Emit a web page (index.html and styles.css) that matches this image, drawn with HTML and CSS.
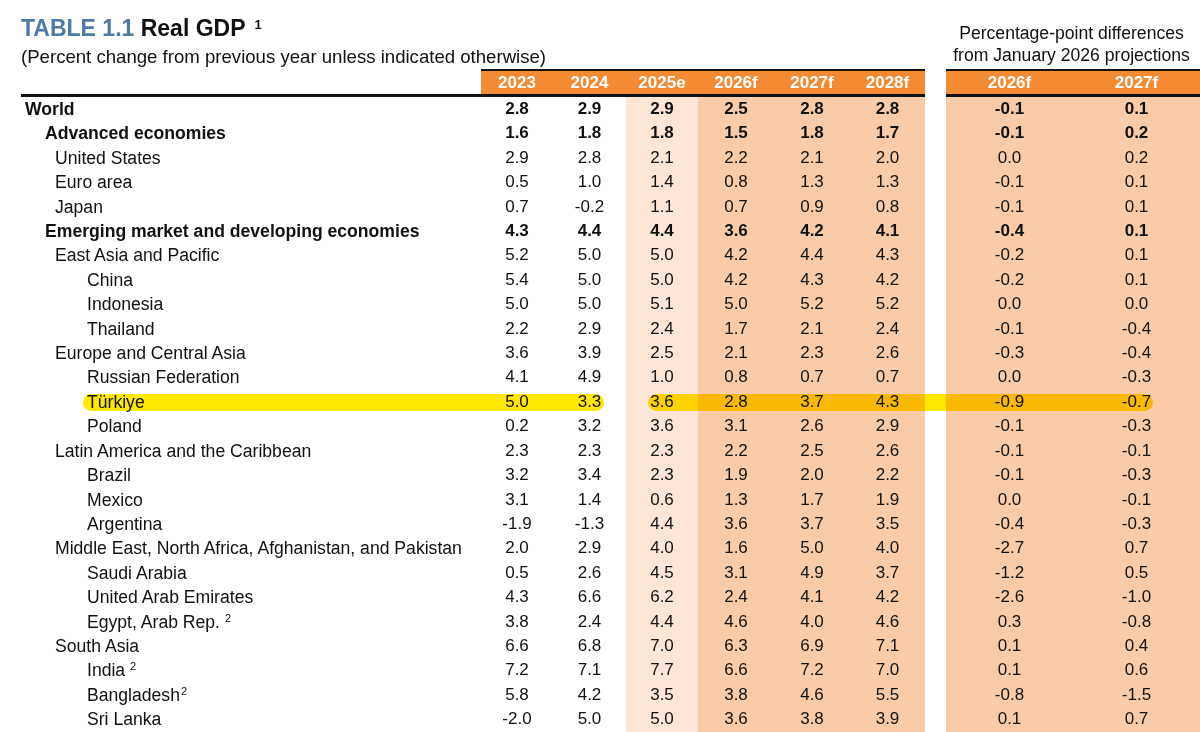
FILE: index.html
```html
<!DOCTYPE html>
<html lang="en">
<head>
<meta charset="utf-8">
<title>Table 1.1 Real GDP</title>
<link rel="stylesheet" href="styles.css">
</head>
<body>
<div class="page">
  <header class="top">
    <div class="titles">
      <h1 class="title"><span class="tag">TABLE 1.1</span> Real GDP <sup class="fn">1</sup></h1>
      <p class="subtitle">(Percent change from previous year unless indicated otherwise)</p>
    </div>
    <div class="diffcap">Percentage-point differences<br>from January 2026 projections</div>
  </header>
  <table class="gdp">
    <colgroup>
      <col class="w-label"><col class="w72"><col class="w73"><col class="w72"><col class="w76"><col class="w76"><col class="w75"><col class="w-gap"><col class="w127"><col class="w127">
    </colgroup>
    <thead>
      <tr><th class="label"></th><th>2023</th><th>2024</th><th>2025e</th><th>2026f</th><th>2027f</th><th>2028f</th><th class="gap"></th><th>2026f</th><th>2027f</th></tr>
    </thead>
    <tbody>
      <tr class="b"><td class="name l0">World</td><td>2.8</td><td>2.9</td><td class="light">2.9</td><td class="peach">2.5</td><td class="peach">2.8</td><td class="peach">2.8</td><td class="gap"></td><td class="peach">-0.1</td><td class="peach">0.1</td></tr>
      <tr class="b"><td class="name l1">Advanced economies</td><td>1.6</td><td>1.8</td><td class="light">1.8</td><td class="peach">1.5</td><td class="peach">1.8</td><td class="peach">1.7</td><td class="gap"></td><td class="peach">-0.1</td><td class="peach">0.2</td></tr>
      <tr><td class="name l2">United States</td><td>2.9</td><td>2.8</td><td class="light">2.1</td><td class="peach">2.2</td><td class="peach">2.1</td><td class="peach">2.0</td><td class="gap"></td><td class="peach">0.0</td><td class="peach">0.2</td></tr>
      <tr><td class="name l2">Euro area</td><td>0.5</td><td>1.0</td><td class="light">1.4</td><td class="peach">0.8</td><td class="peach">1.3</td><td class="peach">1.3</td><td class="gap"></td><td class="peach">-0.1</td><td class="peach">0.1</td></tr>
      <tr><td class="name l2">Japan</td><td>0.7</td><td>-0.2</td><td class="light">1.1</td><td class="peach">0.7</td><td class="peach">0.9</td><td class="peach">0.8</td><td class="gap"></td><td class="peach">-0.1</td><td class="peach">0.1</td></tr>
      <tr class="b"><td class="name l1">Emerging market and developing economies</td><td>4.3</td><td>4.4</td><td class="light">4.4</td><td class="peach">3.6</td><td class="peach">4.2</td><td class="peach">4.1</td><td class="gap"></td><td class="peach">-0.4</td><td class="peach">0.1</td></tr>
      <tr><td class="name l2">East Asia and Pacific</td><td>5.2</td><td>5.0</td><td class="light">5.0</td><td class="peach">4.2</td><td class="peach">4.4</td><td class="peach">4.3</td><td class="gap"></td><td class="peach">-0.2</td><td class="peach">0.1</td></tr>
      <tr><td class="name l3">China</td><td>5.4</td><td>5.0</td><td class="light">5.0</td><td class="peach">4.2</td><td class="peach">4.3</td><td class="peach">4.2</td><td class="gap"></td><td class="peach">-0.2</td><td class="peach">0.1</td></tr>
      <tr><td class="name l3">Indonesia</td><td>5.0</td><td>5.0</td><td class="light">5.1</td><td class="peach">5.0</td><td class="peach">5.2</td><td class="peach">5.2</td><td class="gap"></td><td class="peach">0.0</td><td class="peach">0.0</td></tr>
      <tr><td class="name l3">Thailand</td><td>2.2</td><td>2.9</td><td class="light">2.4</td><td class="peach">1.7</td><td class="peach">2.1</td><td class="peach">2.4</td><td class="gap"></td><td class="peach">-0.1</td><td class="peach">-0.4</td></tr>
      <tr><td class="name l2">Europe and Central Asia</td><td>3.6</td><td>3.9</td><td class="light">2.5</td><td class="peach">2.1</td><td class="peach">2.3</td><td class="peach">2.6</td><td class="gap"></td><td class="peach">-0.3</td><td class="peach">-0.4</td></tr>
      <tr><td class="name l3">Russian Federation</td><td>4.1</td><td>4.9</td><td class="light">1.0</td><td class="peach">0.8</td><td class="peach">0.7</td><td class="peach">0.7</td><td class="gap"></td><td class="peach">0.0</td><td class="peach">-0.3</td></tr>
      <tr><td class="name l3">Türkiye</td><td>5.0</td><td>3.3</td><td class="light">3.6</td><td class="peach">2.8</td><td class="peach">3.7</td><td class="peach">4.3</td><td class="gap"></td><td class="peach">-0.9</td><td class="peach">-0.7</td></tr>
      <tr><td class="name l3">Poland</td><td>0.2</td><td>3.2</td><td class="light">3.6</td><td class="peach">3.1</td><td class="peach">2.6</td><td class="peach">2.9</td><td class="gap"></td><td class="peach">-0.1</td><td class="peach">-0.3</td></tr>
      <tr><td class="name l2">Latin America and the Caribbean</td><td>2.3</td><td>2.3</td><td class="light">2.3</td><td class="peach">2.2</td><td class="peach">2.5</td><td class="peach">2.6</td><td class="gap"></td><td class="peach">-0.1</td><td class="peach">-0.1</td></tr>
      <tr><td class="name l3">Brazil</td><td>3.2</td><td>3.4</td><td class="light">2.3</td><td class="peach">1.9</td><td class="peach">2.0</td><td class="peach">2.2</td><td class="gap"></td><td class="peach">-0.1</td><td class="peach">-0.3</td></tr>
      <tr><td class="name l3">Mexico</td><td>3.1</td><td>1.4</td><td class="light">0.6</td><td class="peach">1.3</td><td class="peach">1.7</td><td class="peach">1.9</td><td class="gap"></td><td class="peach">0.0</td><td class="peach">-0.1</td></tr>
      <tr><td class="name l3">Argentina</td><td>-1.9</td><td>-1.3</td><td class="light">4.4</td><td class="peach">3.6</td><td class="peach">3.7</td><td class="peach">3.5</td><td class="gap"></td><td class="peach">-0.4</td><td class="peach">-0.3</td></tr>
      <tr><td class="name l2">Middle East, North Africa, Afghanistan, and Pakistan</td><td>2.0</td><td>2.9</td><td class="light">4.0</td><td class="peach">1.6</td><td class="peach">5.0</td><td class="peach">4.0</td><td class="gap"></td><td class="peach">-2.7</td><td class="peach">0.7</td></tr>
      <tr><td class="name l3">Saudi Arabia</td><td>0.5</td><td>2.6</td><td class="light">4.5</td><td class="peach">3.1</td><td class="peach">4.9</td><td class="peach">3.7</td><td class="gap"></td><td class="peach">-1.2</td><td class="peach">0.5</td></tr>
      <tr><td class="name l3">United Arab Emirates</td><td>4.3</td><td>6.6</td><td class="light">6.2</td><td class="peach">2.4</td><td class="peach">4.1</td><td class="peach">4.2</td><td class="gap"></td><td class="peach">-2.6</td><td class="peach">-1.0</td></tr>
      <tr><td class="name l3">Egypt, Arab Rep. <sup class="note">2</sup></td><td>3.8</td><td>2.4</td><td class="light">4.4</td><td class="peach">4.6</td><td class="peach">4.0</td><td class="peach">4.6</td><td class="gap"></td><td class="peach">0.3</td><td class="peach">-0.8</td></tr>
      <tr><td class="name l2">South Asia</td><td>6.6</td><td>6.8</td><td class="light">7.0</td><td class="peach">6.3</td><td class="peach">6.9</td><td class="peach">7.1</td><td class="gap"></td><td class="peach">0.1</td><td class="peach">0.4</td></tr>
      <tr><td class="name l3">India <sup class="note">2</sup></td><td>7.2</td><td>7.1</td><td class="light">7.7</td><td class="peach">6.6</td><td class="peach">7.2</td><td class="peach">7.0</td><td class="gap"></td><td class="peach">0.1</td><td class="peach">0.6</td></tr>
      <tr><td class="name l3">Bangladesh<sup class="note tight">2</sup></td><td>5.8</td><td>4.2</td><td class="light">3.5</td><td class="peach">3.8</td><td class="peach">4.6</td><td class="peach">5.5</td><td class="gap"></td><td class="peach">-0.8</td><td class="peach">-1.5</td></tr>
      <tr><td class="name l3">Sri Lanka</td><td>-2.0</td><td>5.0</td><td class="light">5.0</td><td class="peach">3.6</td><td class="peach">3.8</td><td class="peach">3.9</td><td class="gap"></td><td class="peach">0.1</td><td class="peach">0.7</td></tr>
    </tbody>
  </table>
  <div class="hl hl-left"></div>
  <div class="hl hl-right"></div>
</div>
</body>
</html>
```

FILE: styles.css
```css
* { box-sizing: border-box; }

html, body {
  margin: 0;
  padding: 0;
  background: #ffffff;
  overflow: hidden;
}

body {
  font-family: "Liberation Sans", Arial, sans-serif;
  color: #111111;
}

.page {
  position: relative;
  width: 1200px;
  height: 732px;
  padding-left: 21px;
}

/* ---------- heading area ---------- */
.top {
  display: flex;
  height: 69px;
}

.titles {
  flex: 1;
  padding-top: 14px;
}

.title {
  margin: 0;
  font-size: 23px;
  line-height: 28px;
  font-weight: bold;
  color: #111111;
  white-space: nowrap;
}

.tag { color: #4f79a7; }

.fn {
  font-size: 13px;
  line-height: 0;
  vertical-align: 7px;
  margin-left: 3px;
}

.subtitle {
  margin: 4px 0 0;
  font-size: 18.6px;
  line-height: 22px;
  white-space: nowrap;
}

.diffcap {
  width: 254px;
  padding-top: 22px;
  padding-right: 3px;
  text-align: center;
  font-size: 17.6px;
  line-height: 22px;
  white-space: nowrap;
}

/* ---------- table ---------- */
.gdp {
  width: 1179px;
  table-layout: fixed;
  border-collapse: separate;
  border-spacing: 0;
  font-size: 17px;
}

.w-label { width: 460px; }
.w72 { width: 72px; }
.w73 { width: 73px; }
.w75 { width: 75px; }
.w76 { width: 76px; }
.w-gap { width: 21px; }
.w127 { width: 127px; }

.gdp th {
  padding: 0;
  line-height: 23px;
  font-weight: bold;
  color: #ffffff;
  background: #f48a32;
  border-top: 2px solid #111111;
  border-bottom: 3px solid #111111;
  text-align: center;
}

.gdp th.label {
  background: transparent;
  border-top-color: transparent;
}

.gdp th.gap {
  background: transparent;
  border-top-color: transparent;
  border-bottom-color: transparent;
}

.gdp td {
  padding: 0;
  height: 24.4px;
  line-height: 24.4px;
  text-align: center;
  white-space: nowrap;
  vertical-align: middle;
}

.gdp td.name {
  text-align: left;
  font-size: 17.6px;
}

.l0 { padding-left: 4px !important; }
.l1 { padding-left: 24px !important; }
.l2 { padding-left: 34px !important; }
.l3 { padding-left: 66px !important; }

.gdp tr.b td { font-weight: bold; }

.light { background: #fde6d8; }
.peach { background: #f9cba6; }

.note {
  font-size: 11px;
  line-height: 0;
  vertical-align: 6px;
}

.note.tight { margin-left: 1px; }

/* ---------- highlighter marks over the Türkiye row ---------- */
.hl {
  position: absolute;
  top: 394px;
  height: 17px;
  border-radius: 8.5px;
  background: #ffe900;
  mix-blend-mode: multiply;
}

.hl-left {
  left: 83px;
  width: 521px;
}

.hl-right {
  left: 648px;
  width: 505px;
}
```
